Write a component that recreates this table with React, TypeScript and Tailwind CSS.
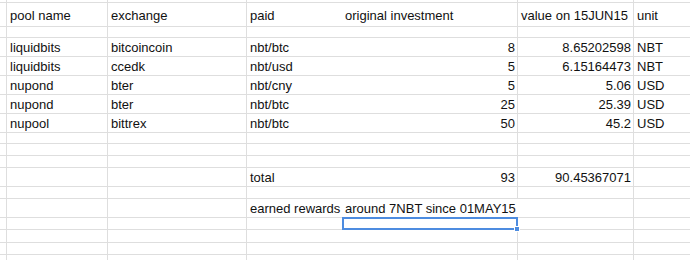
import type { ReactNode } from 'react'

type Row = {
  h: string
  cells?: (ReactNode | null)[]
  header?: boolean
  overflowD?: boolean
  selected?: boolean
}

// columns: gutter, A, B, C, D, E, F
const widths = ['w-[7px]', 'w-[101px]', 'w-[139px]', 'w-[95px]', 'w-[176px]', 'w-[116px]', 'flex-1']

const rows: Row[] = [
  { h: 'h-[3px]' },
  { h: 'h-[24px]', header: true, cells: ['pool name', 'exchange', 'paid', 'original investment', 'value on 15JUN15', 'unit'] },
  { h: 'h-[11px]' },
  { h: 'h-[19px]', cells: ['liquidbits', 'bitcoincoin', 'nbt/btc', '8', '8.65202598', 'NBT'] },
  { h: 'h-[19px]', cells: ['liquidbits', 'ccedk', 'nbt/usd', '5', '6.15164473', 'NBT'] },
  { h: 'h-[19px]', cells: ['nupond', 'bter', 'nbt/cny', '5', '5.06', 'USD'] },
  { h: 'h-[19px]', cells: ['nupond', 'bter', 'nbt/btc', '25', '25.39', 'USD'] },
  { h: 'h-[19px]', cells: ['nupool', 'bittrex', 'nbt/btc', '50', '45.2', 'USD'] },
  { h: 'h-[11px]' },
  { h: 'h-[12px]' },
  { h: 'h-[12px]' },
  { h: 'h-[19px]', cells: [null, null, 'total', '93', '90.45367071', null] },
  { h: 'h-[12px]' },
  { h: 'h-[19px]', overflowD: true, cells: [null, null, 'earned rewards', 'around 7NBT since 01MAY15', null, null] },
  { h: 'h-[12px]', selected: true },
  { h: 'h-[13px]' },
  { h: 'h-[12px]' },
  { h: 'h-[20px]' },
]

// numbers sit at the right of their cell, text at the left
const isNumber = (v: ReactNode) => typeof v === 'string' && /^[\d.]+$/.test(v)

function Cell({ row, col }: { row: Row; col: number }) {
  const value = col > 0 && row.cells ? row.cells[col - 1] : null
  const noRight = col === 3 || col === 6 || (col === 4 && row.overflowD)
  const num = isNumber(value)
  const open = col === 4 && (row.overflowD || row.selected)

  return (
    <div
      className={`relative shrink-0 flex ${widths[col]} ${row.h} border-b border-[#dedede] ${
        noRight ? '' : 'border-r'
      } ${row.header ? 'items-end pb-[3px]' : 'items-center'} ${
        num ? 'justify-end pr-[2px]' : 'justify-start pl-[3px]'
      } ${open ? 'overflow-visible z-10' : 'overflow-hidden'}`}
    >
      {value != null && <span className="whitespace-nowrap leading-[15px]">{value}</span>}

      {/* active cell outline */}
      {row.selected && col === 4 && (
        <div className="absolute -top-px left-0 w-[176px] h-[13px] border-2 border-[#4d8ce0] pointer-events-none">
          <div className="absolute -right-[4px] -bottom-[4px] w-[6px] h-[6px] bg-[#4d8ce0] border border-white" />
        </div>
      )}
    </div>
  )
}

export default function App() {
  return (
    <div
      className="w-[690px] h-[260px] overflow-hidden bg-white text-[13px] text-[#111]"
      style={{ fontFamily: '"Liberation Sans", Arial, sans-serif' }}
    >
      {rows.map((row, i) => (
        <div key={i} className="flex">
          {widths.map((_, c) => (
            <Cell key={c} row={row} col={c} />
          ))}
        </div>
      ))}
    </div>
  )
}
